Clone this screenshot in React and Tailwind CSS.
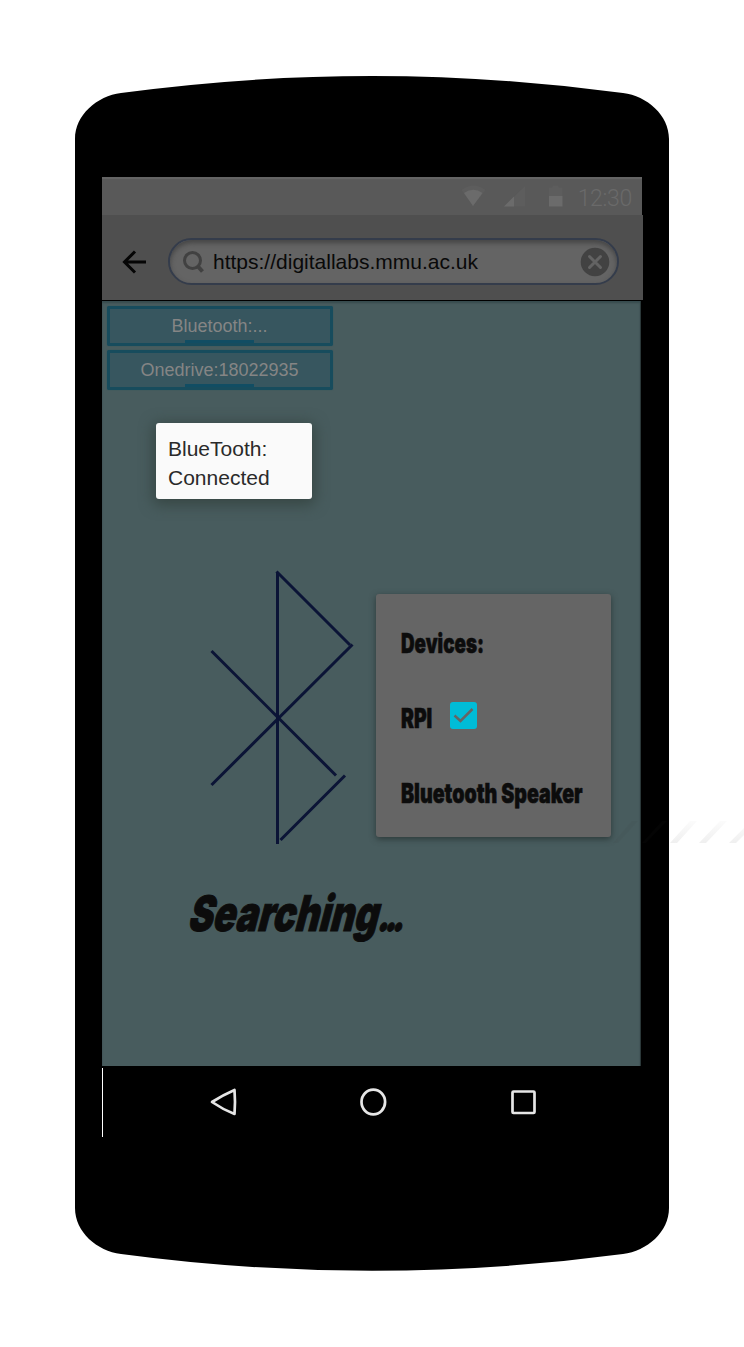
import React from "react";

const sans = "font-['Liberation_Sans',Arial,sans-serif]";

function PhoneBody() {
  return (
    <svg className="absolute inset-0" width="744" height="1347" viewBox="0 0 744 1347" aria-hidden="true">
      <path
        d="M75 139C75 115 97 96 121 93Q372 59 623 93C647 96 669 115 669 139V1208C669 1232 647 1251 623 1254Q372 1287.500 121 1254C97 1251 75 1232 75 1208Z"
        fill="#000"
      />
    </svg>
  );
}

function StatusBar() {
  return (
    <div className="flex h-[38px] w-[540px] items-center border-t-2 border-[#646464] bg-[#595959] pr-[10px]">
      <svg className="ml-[358px] shrink-0" width="108" height="24" viewBox="460 186 108 24" aria-hidden="true">
        <path d="M461.500 191Q473.500 182 485.500 191L473 207Z" fill="#5d5d5d" />
        <path d="M464 194Q473.500 187.500 482.500 194L473 207Z" fill="#6b6b6b" />
        <path d="M504 207.500L525 187V207.500Z" fill="#5d5d5d" />
        <path d="M504 207.500L514 197.500V207.500Z" fill="#6b6b6b" />
        <path d="M549 197V188.500H552.500V186.500H558.500V188.500H562.500V197Z" fill="#5d5d5d" />
        <path d="M549 197H562.500V207.500H549Z" fill="#6b6b6b" />
      </svg>
      <span className="ml-auto pt-[3px] font-['Roboto',sans-serif] text-[23px] leading-none font-light tracking-[-0.3px] text-[#6a6a6a]">12:30</span>
    </div>
  );
}

function AddressBar() {
  return (
    <div className="flex h-[85px] w-[541px] items-center bg-[#4f4f4f] pt-[9px]">
      <svg className="ml-[20px] shrink-0" width="24" height="24" viewBox="0 0 24 24" fill="none" stroke="#050505" strokeWidth="3" aria-hidden="true">
        <path d="M24 12H3M13 1.500L2.500 12L13 22.500" />
      </svg>
      <div className="-mt-px ml-[22px] flex h-[47px] w-[451px] items-center rounded-full border-2 border-[#343c4b] bg-[#646464] pr-[7px] pl-[12px] shadow-[inset_0_3px_5px_#454545]">
        <svg className="shrink-0" width="24" height="24" viewBox="0 0 24 24" fill="none" stroke="#414141" aria-hidden="true">
          <circle cx="10.500" cy="10.500" r="8" strokeWidth="3" />
          <path d="M16 16.500L20.500 21.500" strokeWidth="4" />
        </svg>
        <span className={`${sans} ml-[7px] text-[21px] leading-none text-[#090909]`}>https://digitallabs.mmu.ac.uk</span>
        <svg className="ml-auto shrink-0" width="30" height="30" viewBox="0 0 30 30" aria-hidden="true">
          <circle cx="15" cy="15" r="14.300" fill="#424242" />
          <path d="M9.500 9.500L20.500 20.500M20.500 9.500L9.500 20.500" stroke="#636363" strokeWidth="3" strokeLinecap="round" />
        </svg>
      </div>
    </div>
  );
}

function Tag({ children }) {
  return (
    <div className={`${sans} relative flex h-[40px] w-[226px] items-center justify-center rounded-[2px] border-[3px] border-[#174c5d] bg-[#37565f] pr-px text-[18px] leading-none text-[#858585] shadow-[0_0_1px_#1f505f]`}>
      <span>{children}</span>
      <i className="absolute bottom-0 left-[75px] h-[3px] w-[69px] bg-[#114d63]" />
    </div>
  );
}

function BluetoothMark() {
  return (
    <svg className="shrink-0" width="150" height="280" viewBox="206 568 150 280" fill="none" stroke="#0b1436" strokeWidth="3" aria-hidden="true">
      <path d="M277.500 572V844" />
      <path d="M276.500 571.500L350 645" />
      <path d="M352.500 644.500L211.500 785" />
      <path d="M211.500 651L336 775.500" />
      <path d="M345 775.500L280.500 840" />
    </svg>
  );
}

const heavy = "inline-block origin-left whitespace-nowrap font-['Inter',sans-serif] font-black text-[#0c0c0c]";

function DeviceCard() {
  return (
    <div className="mt-[26px] ml-[20px] flex h-[243px] w-[235px] flex-col gap-[45px] rounded-[3px] bg-[#656565] pt-[34px] pl-[25px] shadow-[0_2px_6px_#2c3939]">
      <div className="h-[30px]">
        <span className={`${heavy} scale-x-[0.710] text-[26.500px] leading-[30px] [-webkit-text-stroke:0.6px_#0c0c0c]`}>Devices:</span>
      </div>
      <div className="flex h-[30px]">
        <div className="w-[49px]">
          <span className={`${heavy} scale-x-[0.730] text-[26.500px] leading-[30px] [-webkit-text-stroke:0.6px_#0c0c0c]`}>RPI</span>
        </div>
        <svg className="-mt-px shrink-0" width="27" height="27" viewBox="0 0 27 27" aria-hidden="true">
          <rect width="27" height="27" rx="3" fill="#00bcd7" />
          <path d="M4.500 13.500L10.500 19L22.500 7" fill="none" stroke="#656565" strokeWidth="2.500" />
        </svg>
      </div>
      <div className="h-[30px]">
        <span className={`${heavy} scale-x-[0.740] text-[26.500px] leading-[30px] [-webkit-text-stroke:0.6px_#0c0c0c]`}>Bluetooth Speaker</span>
      </div>
    </div>
  );
}

function NavBar() {
  return (
    <div className="mt-[2px] flex h-[69px] w-[540px] items-center border-l border-white pl-[105px]">
      <svg className="-mt-[2px]" width="332" height="30" viewBox="208 1087 332 30" fill="none" stroke="#e6e6e6" strokeWidth="2.700" strokeLinejoin="round" aria-hidden="true">
        <path d="M234.500 1090Q235.500 1102 234.500 1114Q223 1109.500 212 1102Q223 1095 234.500 1090Z" />
        <ellipse cx="373.300" cy="1102" rx="11.800" ry="12.300" />
        <rect x="512.500" y="1091.500" width="22" height="21.500" rx="1" />
      </svg>
    </div>
  );
}

export default function App() {
  return (
    <div className="relative h-[1347px] w-[744px] overflow-hidden bg-white">
      <PhoneBody />
      <div className="relative ml-[102px] flex flex-col pt-[177px]">
        <StatusBar />
        <AddressBar />
        <main className="mt-[1px] flex h-[765px] w-[539px] flex-col border-r border-[#2b3839] bg-[#485c5e] pt-[5px] shadow-[inset_0_2px_2px_#374b4e]">
          <div className="ml-[5px] flex flex-col gap-[4px]">
            <Tag>Bluetooth:...</Tag>
            <Tag>Onedrive:18022935</Tag>
          </div>
          <div className={`${sans} mt-[33px] ml-[54px] h-[76px] w-[156px] rounded-[3px] bg-[#fafafa] pt-[11px] pl-[12px] text-[21px] leading-[29px] text-[#2a2a2a] shadow-[0_3px_14px_3px_#374744]`}>
            BlueTooth:
            <br />
            Connected
          </div>
          <div className="mt-[69px] ml-[104px] flex">
            <BluetoothMark />
            <DeviceCard />
          </div>
          <div className="mt-[38px] ml-[89px] h-[56px]">
            <span className={`${heavy} scale-x-[0.755] -skew-x-[19deg] text-[49px] leading-[56px] [-webkit-text-stroke:1px_#0c0c0c]`}>
              Searching<span className="text-[44px] tracking-[-6.5px]">...</span>
            </span>
          </div>
        </main>
        <NavBar />
      </div>
      <svg className="absolute top-[818px] left-[610px]" width="134" height="26" viewBox="610 818 134 26" aria-hidden="true">
        <defs>
          <linearGradient id="streak" x1="0" y1="0" x2="0" y2="1">
            <stop offset="0" stopColor="#808080" stopOpacity="0.030" />
            <stop offset="1" stopColor="#808080" stopOpacity="0.120" />
          </linearGradient>
        </defs>
        <path d="M670 843L690 821H697L677 843ZM699 843L720 821H727L706 843ZM729 843L744 828V835L736 843Z" fill="url(#streak)" />
        <path d="M613 843L632 821H638L618 843ZM642 843L662 821H667L646 843Z" fill="#333" opacity="0.070" />
      </svg>
    </div>
  );
}
